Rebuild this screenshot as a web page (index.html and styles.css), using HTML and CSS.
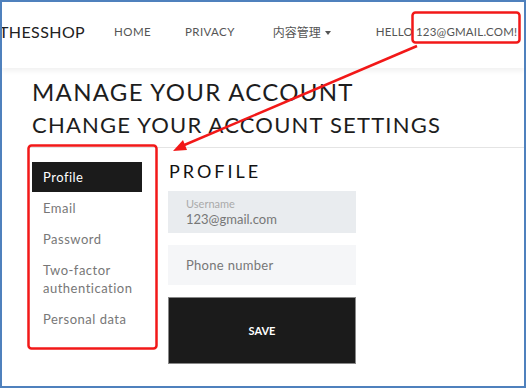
FILE: index.html
```html
<!DOCTYPE html>
<html lang="en">
<head>
    <meta charset="UTF-8">
    <title>Manage your account</title>
    <link rel="stylesheet" href="styles.css">
</head>
<body>
    <div class="frame">
        <header class="navbar">
            <span class="brand">THESSHOP</span>
            <a class="nav_link nav_home">HOME</a>
            <a class="nav_link">PRIVACY</a>
            <a class="nav_link nav_drop">内容管理<span class="caret"></span></a>
            <a class="nav_link nav_hello">HELLO 123@GMAIL.COM!</a>
        </header>
        <main class="main">
            <h1 class="title">MANAGE YOUR ACCOUNT</h1>
            <h2 class="subtitle">CHANGE YOUR ACCOUNT SETTINGS</h2>
            <div class="account">
                <ul class="side_nav">
                    <li class="side_item active">Profile</li>
                    <li class="side_item">Email</li>
                    <li class="side_item">Password</li>
                    <li class="side_item">Two-factor<br>authentication</li>
                    <li class="side_item">Personal data</li>
                </ul>
                <section class="profile">
                    <h3 class="profile_title">PROFILE</h3>
                    <div class="field field_disabled">
                        <span class="field_label">Username</span>
                        <span class="field_value">123@gmail.com</span>
                    </div>
                    <div class="field">
                        <span class="field_placeholder">Phone number</span>
                    </div>
                    <button class="save_btn">SAVE</button>
                </section>
            </div>
        </main>
        <!-- red annotation marks drawn over the screenshot -->
        <svg class="marks" width="526" height="388" viewBox="0 0 526 388">
            <rect x="412.5" y="12.5" width="107" height="30" rx="3" fill="none" stroke="#f21818" stroke-width="2.5"/>
            <rect x="28.5" y="145.5" width="128" height="203" rx="3" fill="none" stroke="#f21818" stroke-width="2.5"/>
            <line x1="417" y1="46" x2="182" y2="146" stroke="#f21818" stroke-width="2.5"/>
            <polygon points="173,151 183,140 187,150" fill="#f21818"/>
        </svg>
    </div>
</body>
</html>
```
FILE: styles.css
```css
*{
    box-sizing: border-box;
}
body{
    margin: 0;
    font-family: "Lato", "Noto Sans CJK SC", sans-serif;
}
.frame{
    width: 526px;
    height: 388px;
    border: 2px solid #4f81bd;
    position: relative;
    overflow: hidden;
    background: #fff;
}
.navbar{
    height: 66px;
    padding-bottom: 8px;
    display: flex;
    align-items: center;
    white-space: nowrap;
    box-shadow: 0 3px 5px rgba(0,0,0,.06);
}
.brand{
    flex-shrink: 0;
    font-size: 16px;
    letter-spacing: .4px;
    color: #222;
    margin-left: -3px;
    margin-right: 29px;
}
.nav_link{
    flex-shrink: 0;
    font-size: 11.5px;
    letter-spacing: .4px;
    color: #555;
    margin-right: 38px;
}
.nav_home{
    margin-right: 34px;
}
.nav_drop{
    font-size: 12px;
    letter-spacing: 0;
    margin-right: 45px;
}
.caret{
    display: inline-block;
    width: 0;
    height: 0;
    margin-left: 4px;
    vertical-align: 2px;
    border-left: 3px solid transparent;
    border-right: 3px solid transparent;
    border-top: 4px solid #555;
}
.nav_hello{
    letter-spacing: .2px;
    margin-right: 0;
}
.main{
    padding: 7px 0 0 30px;
}
.title,.subtitle{
    margin: 0;
    font-weight: 400;
    font-size: 24px;
    letter-spacing: 1.3px;
    line-height: 33px;
    white-space: nowrap;
    color: #1d1d1d;
}
.subtitle{
    font-size: 22px;
    letter-spacing: 1.2px;
}
.account{
    display: flex;
    margin-top: 6px;
    margin-left: -4px;
    border-top: 1px solid #e4e4e4;
    padding-top: 14px;
}
.side_nav{
    list-style: none;
    margin: 0 26px 0 4px;
    padding: 0;
    width: 110px;
}
.side_item{
    font-size: 13px;
    line-height: 18px;
    padding: 6px 11px;
    margin-bottom: 1px;
    color: #777;
    letter-spacing: .5px;
}
.side_item.active{
    background: #1b1b1b;
    color: #fff;
}
.profile{
    width: 188px;
}
.profile_title{
    margin: -4px 0 7px 1px;
    font-weight: 400;
    font-size: 18px;
    letter-spacing: 3px;
    line-height: 26px;
    color: #111;
}
.field{
    height: 40px;
    background: #f5f6f8;
    padding: 0 18px;
    display: flex;
    flex-direction: column;
    justify-content: center;
    margin-bottom: 12px;
}
.field_disabled{
    height: 42px;
    background: #e9ecef;
}
.field_label{
    font-size: 11px;
    color: #aaa;
    line-height: 14px;
}
.field_value{
    font-size: 13px;
    color: #777;
    line-height: 16px;
}
.field_placeholder{
    font-size: 13px;
    color: #777;
    letter-spacing: .3px;
}
.save_btn{
    display: block;
    width: 188px;
    height: 67px;
    background: #1b1b1b;
    border: 1px solid #888;
    color: #fff;
    font-family: inherit;
    font-weight: 700;
    font-size: 11px;
}
.marks{
    position: absolute;
    left: -2px;
    top: -2px;
}
```
